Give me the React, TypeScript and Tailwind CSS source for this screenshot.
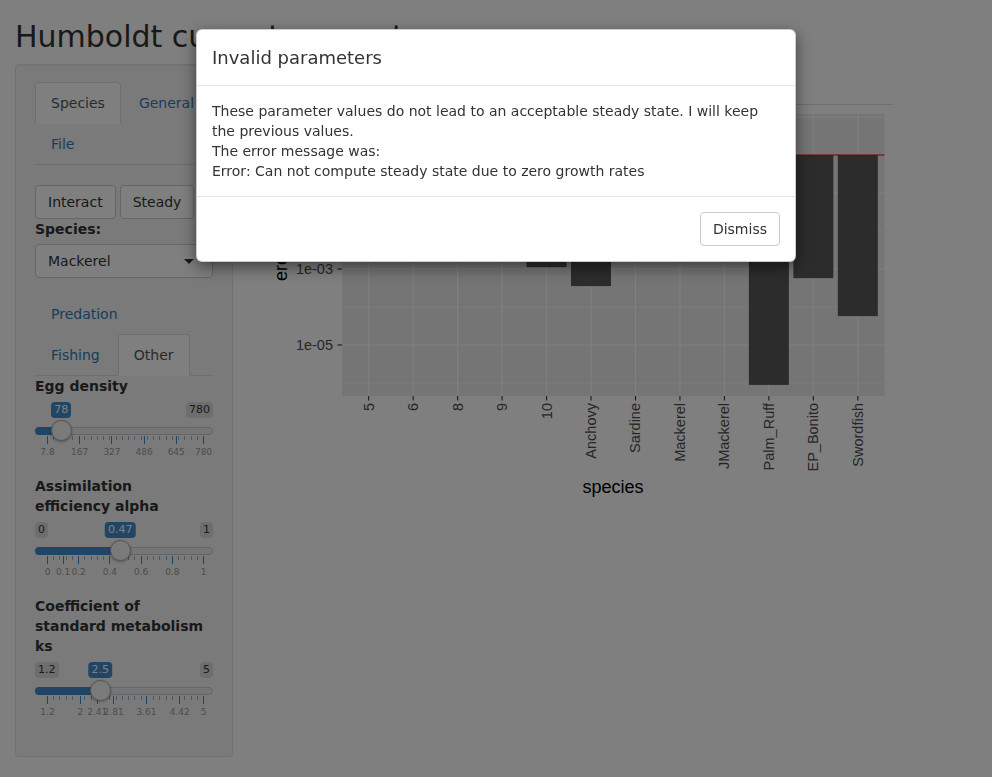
import React from "react";

const TRACK = 156;

function NavTabs({ tabs, active }: { tabs: string[]; active: string }) {
  return (
    <ul className="flex flex-wrap border-b border-[#ddd]">
      {tabs.map((t) => (
        <li key={t} className="-mb-px mr-[2px]">
          <span
            className={
              t === active
                ? "block rounded-t border border-[#ddd] border-b-transparent bg-white px-[15px] py-[10px] leading-5 text-[#555]"
                : "block rounded-t border border-transparent px-[15px] py-[10px] leading-5 text-[#337ab7]"
            }
          >
            {t}
          </span>
        </li>
      ))}
    </ul>
  );
}

function Slider({
  min,
  max,
  value,
  valueText,
  minText,
  maxText,
  grid,
}: {
  min: number;
  max: number;
  value: number;
  valueText: string;
  minText?: string;
  maxText: string;
  grid: [string, number][];
}) {
  const px = (v: number) => 12 + ((v - min) / (max - min)) * TRACK;
  const majors = grid.map((g) => px(g[1]));
  const minors: number[] = [];
  for (let i = 0; i <= 25; i++) {
    const x = 12 + (i * TRACK) / 25;
    if (!majors.some((m) => Math.abs(m - x) < 2)) minors.push(x);
  }
  const hx = px(value);
  return (
    <div className="relative h-[60px] text-[11px]">
      {minText && (
        <span className="absolute left-0 top-[1px] rounded-[4px] bg-black/10 px-[3px] leading-4 text-[#333]">{minText}</span>
      )}
      <span className="absolute right-0 top-[1px] rounded-[4px] bg-black/10 px-[3px] leading-4 text-[#333]">{maxText}</span>
      <span
        className="absolute top-[1px] -translate-x-1/2 rounded-[4px] bg-[#428bca] px-[3px] leading-4 text-white"
        style={{ left: hx }}
      >
        {valueText}
      </span>
      <div className="absolute left-0 right-0 top-[26px] h-2 rounded-full border border-[#ccc] bg-[#ededed]" />
      <div className="absolute left-0 top-[26px] h-2 rounded-l-full bg-[#428bca]" style={{ width: hx }} />
      {majors.map((x, i) => (
        <div key={"M" + i} className="absolute top-[35px] h-[8px] w-px bg-[#428bca]" style={{ left: x }} />
      ))}
      {minors.map((x, i) => (
        <div key={"m" + i} className="absolute top-[35px] h-[4px] w-px bg-[#8fb0d3]" style={{ left: x }} />
      ))}
      {grid.map(([t, v]) => (
        <span
          key={t}
          className="absolute top-[45px] -translate-x-1/2 text-[9px] leading-3 text-[#999]"
          style={{ left: px(v) + 0.5 }}
        >
          {t}
        </span>
      ))}
      <div
        className="absolute top-[19px] h-[21px] w-[21px] rounded-full border border-[#aaa] bg-[#f4f4f4] shadow-[0_1px_3px_rgba(0,0,0,0.3)]"
        style={{ left: hx - 10.5 }}
      />
    </div>
  );
}

const cats = ["5", "6", "8", "9", "10", "Anchovy", "Sardine", "Mackerel", "JMackerel", "Palm_Ruff", "EP_Bonito", "Swordfish"];
const vals = [0.3, 0.2, 0.5, 0.4, 10 ** -2.95, 10 ** -3.45, 0.05, 0.1, 0.2, 10 ** -6.05, 10 ** -3.24, 10 ** -4.24];

function Chart() {
  const step = 542.5 / 12.2;
  const cx = (i: number) => 342 + (0.6 + i) * step;
  const yv = (v: number) => 155 - 38 * Math.log10(v);
  const majors: [string, number][] = [
    ["1e+01", 117],
    ["1e-01", 193],
    ["1e-03", 269],
    ["1e-05", 345],
  ];
  const minors = [155, 231, 307, 383];
  return (
    <svg width="630" height="400" className="block">
      <g transform="translate(-263,-105)" fontFamily="'Liberation Sans', Arial, sans-serif">
        <rect x="342" y="114" width="542.5" height="282" fill="#ebebeb" />
        {minors.map((y) => (
          <line key={y} x1="342" x2="884.5" y1={y} y2={y} stroke="#fff" strokeWidth="0.6" />
        ))}
        {majors.map(([, y]) => (
          <line key={y} x1="342" x2="884.5" y1={y} y2={y} stroke="#fff" strokeWidth="1.1" />
        ))}
        {cats.map((c, i) => (
          <line key={c} x1={cx(i)} x2={cx(i)} y1="114" y2="396" stroke="#fff" strokeWidth="1.1" />
        ))}
        {vals.map((v, i) => (
          <rect key={i} x={cx(i) - 20} y="155" width="40" height={yv(v) - 155} fill="#595959" />
        ))}
        <line x1="342" x2="884.5" y1="155" y2="155" stroke="#e00000" strokeWidth="1.2" />
        {majors.map(([t, y]) => (
          <g key={t}>
            <line x1="337.5" x2="342" y1={y} y2={y} stroke="#333" strokeWidth="1.1" />
            <text x="333" y={y} textAnchor="end" dominantBaseline="central" fontSize="14.5" fill="#4d4d4d">
              {t}
            </text>
          </g>
        ))}
        {cats.map((c, i) => (
          <g key={c}>
            <line x1={cx(i)} x2={cx(i)} y1="396" y2="400.5" stroke="#333" strokeWidth="1.1" />
            <text
              transform={`translate(${cx(i)},403) rotate(-90)`}
              textAnchor="end"
              dominantBaseline="central"
              fontSize="14.5"
              fill="#4d4d4d"
            >
              {c}
            </text>
          </g>
        ))}
        <text x="613" y="493" textAnchor="middle" fontSize="18" fill="#000">
          species
        </text>
        <text transform="translate(287,255) rotate(-90)" textAnchor="middle" fontSize="18" fill="#000">
          erepro
        </text>
      </g>
    </svg>
  );
}

export default function App() {
  return (
    <div className="min-h-[777px] bg-white px-[15px] font-['DejaVu_Sans',sans-serif] text-[14px] leading-5 text-[#333]">
      <h2 className="mb-[10px] mt-5 text-[30px] leading-[33px]">Humboldt current ecosystem</h2>
      <div className="flex items-start">
        <div className="mt-px w-[218px] rounded border border-[#e3e3e3] bg-[#f5f5f5] px-[19px] pb-[20px] pt-[17px] shadow-[inset_0_1px_1px_rgba(0,0,0,0.05)]">
          <NavTabs tabs={["Species", "General", "File"]} active="Species" />
          <div className="pt-5">
            <div className="flex flex-wrap gap-1">
              {["Interact", "Steady"].map((b) => (
                <button key={b} className="rounded border border-[#ccc] bg-white px-3 py-[6px] leading-5 text-[#333]">
                  {b}
                </button>
              ))}
            </div>
            <label className="mb-[5px] block font-bold">Species:</label>
            <div className="mb-[15px] flex h-[34px] items-center justify-between rounded border border-[#ccc] bg-white px-3">
              <span>Mackerel</span>
              <span className="mr-[6px] h-0 w-0 border-x-[5px] border-t-[5px] border-x-transparent border-t-[#333]" />
            </div>
            <NavTabs tabs={["Predation", "Fishing", "Other"]} active="Other" />
            <label className="mb-[5px] block max-w-[172px] font-bold">Egg density</label>
            <div className="mb-[15px]">
              <Slider
                min={7.8}
                max={780}
                value={78}
                valueText="78"
                maxText="780"
                grid={[
                  ["7.8", 7.8],
                  ["167", 167],
                  ["327", 327],
                  ["486", 486],
                  ["645", 645],
                  ["780", 780],
                ]}
              />
            </div>
            <label className="mb-[5px] block max-w-[172px] font-bold">Assimilation efficiency alpha</label>
            <div className="mb-[15px]">
              <Slider
                min={0}
                max={1}
                value={0.47}
                valueText="0.47"
                minText="0"
                maxText="1"
                grid={[
                  ["0", 0],
                  ["0.1", 0.1],
                  ["0.2", 0.2],
                  ["0.4", 0.4],
                  ["0.6", 0.6],
                  ["0.8", 0.8],
                  ["1", 1],
                ]}
              />
            </div>
            <label className="mb-[5px] block max-w-[172px] font-bold">Coefficient of standard metabolism ks</label>
            <div className="mb-[15px]">
              <Slider
                min={1.2}
                max={5}
                value={2.5}
                valueText="2.5"
                minText="1.2"
                maxText="5"
                grid={[
                  ["1.2", 1.2],
                  ["2", 2],
                  ["2.41", 2.41],
                  ["2.81", 2.81],
                  ["3.61", 3.61],
                  ["4.42", 4.42],
                  ["5", 5],
                ]}
              />
            </div>
          </div>
        </div>
        <div className="ml-[30px] w-[630px]">
          <NavTabs tabs={["Spectra", "Biomass", "Growth", "Repro", "Catch", "Rates"]} active="Repro" />
          <Chart />
        </div>
      </div>

      <div className="fixed inset-0 bg-black/50" />
      <div className="fixed inset-0 flex justify-center pt-[29px]">
        <div className="h-fit w-[600px] rounded-md border border-black/20 bg-white shadow-[0_5px_15px_rgba(0,0,0,0.5)]">
          <div className="border-b border-[#e5e5e5] p-[15px]">
            <h4 className="text-[18px] leading-[25px] text-[#333]">Invalid parameters</h4>
          </div>
          <div className="p-[15px]">
            These parameter values do not lead to an acceptable steady state. I will keep the previous values.
            <br />
            The error message was:
            <br />
            Error: Can not compute steady state due to zero growth rates
          </div>
          <div className="flex justify-end border-t border-[#e5e5e5] p-[15px]">
            <button className="rounded border border-[#ccc] bg-white px-3 py-[6px] leading-5 text-[#333]">Dismiss</button>
          </div>
        </div>
      </div>
    </div>
  );
}
